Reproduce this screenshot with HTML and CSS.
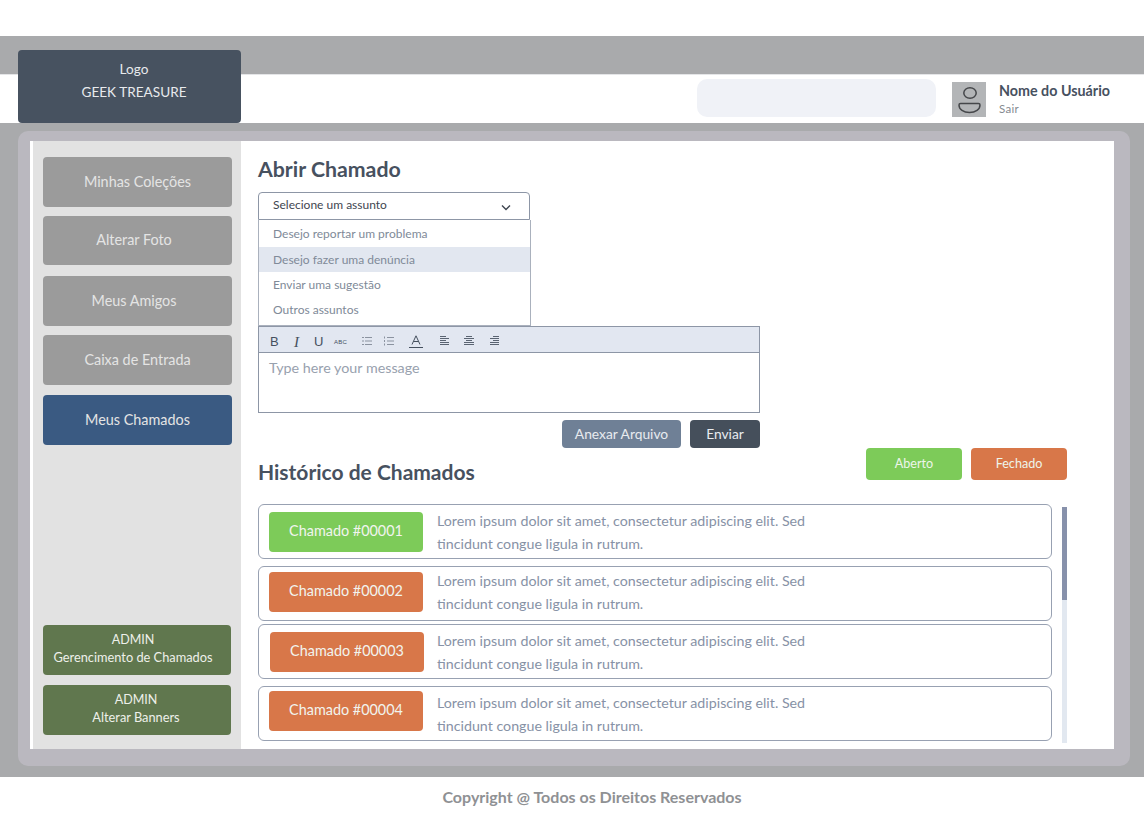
FILE: index.html
```html
<!DOCTYPE html>
<html lang="pt">
<head>
<meta charset="utf-8">
<title>Geek Treasure</title>
<link rel="stylesheet" href="styles.css">
</head>
<body>
<div class="page">
  <div class="banner"></div>
  <header class="header">
    <div class="logo"><span>Logo</span><span>GEEK TREASURE</span></div>
    <div class="search"></div>
    <div class="avatar">
      <svg width="34" height="35" viewBox="0 0 34 35" fill="none" stroke="#45474a" stroke-width="1.500"><ellipse cx="18" cy="11" rx="6.200" ry="5.300"/><path d="M8.500 21.500h18c1 0 1.500.5 1.500 1.500 0 4.500-4.500 7.500-10.500 7.500S7 27.500 7 23c0-1 .5-1.500 1.500-1.500z"/></svg>
    </div>
    <div class="user"><strong>Nome do Usuário</strong><span>Sair</span></div>
  </header>
  <div class="frame">
    <div class="panel">
      <div class="card">
        <nav class="sidebar">
          <a class="nav nav-gray">Minhas Coleções</a>
          <a class="nav nav-gray nav-b nav-shift">Alterar Foto</a>
          <a class="nav nav-gray nav-c nav-shift">Meus Amigos</a>
          <a class="nav nav-gray nav-b">Caixa de Entrada</a>
          <a class="nav nav-blue nav-d">Meus Chamados</a>
          <a class="nav nav-green nav-admin"><span>ADMIN</span><span>Gerencimento de Chamados</span></a>
          <a class="nav nav-green nav-admin2"><span>ADMIN</span><span>Alterar Banners</span></a>
        </nav>
        <main class="main">
          <h1 class="title">Abrir Chamado</h1>
          <div class="select">
            <div class="select-head">
              <span>Selecione um assunto</span>
              <svg width="10" height="8" viewBox="0 0 10 8" fill="none" stroke="#3f4650" stroke-width="1.400"><path d="M1 1.500l4 4 4-4"/></svg>
            </div>
            <ul class="options">
              <li>Desejo reportar um problema</li>
              <li class="active">Desejo fazer uma denúncia</li>
              <li>Enviar uma sugestão</li>
              <li>Outros assuntos</li>
            </ul>
          </div>
          <div class="editor">
            <div class="toolbar">
              <span class="tool tool-b">B</span>
              <span class="tool tool-i">I</span>
              <span class="tool tool-u">U</span>
              <span class="tool tool-abc">ABC</span>
              <svg class="ic ic-l1" width="10" height="10" viewBox="0 0 10 10" stroke="#8b93a0" stroke-width="1"><path d="M3 1.500h7M3 5h7M3 8.500h7M0 1.500h2M0 5h2M0 8.500h2"/></svg>
              <svg class="ic ic-l2" width="10" height="10" viewBox="0 0 10 10" stroke="#8b93a0" stroke-width="1"><path d="M3 1.500h7M3 5h7M3 8.500h7M.5 .5v2M.5 4v2M.5 7.500v2"/></svg>
              <svg class="ic ic-a" width="14" height="13" viewBox="0 0 14 13" fill="none" stroke="#45505e" stroke-width="1"><path d="M3 9.500 7 .8l4 8.700M4.500 6.500h5M0 12.500h14"/></svg>
              <svg class="ic ic-al1" width="10" height="9" viewBox="0 0 10 9" stroke="#5a6472" stroke-width="1"><path d="M0 .5h6M0 2.500h9M0 4.500h6M0 6.500h9M0 8.500h9"/></svg>
              <svg class="ic ic-al2" width="10" height="9" viewBox="0 0 10 9" stroke="#5a6472" stroke-width="1"><path d="M2 .5h6M0 2.500h10M2 4.500h6M0 6.500h10M0 8.500h10"/></svg>
              <svg class="ic ic-al3" width="10" height="9" viewBox="0 0 10 9" stroke="#5a6472" stroke-width="1"><path d="M4 .5h6M1 2.500h9M4 4.500h6M1 6.500h9M1 8.500h9"/></svg>
            </div>
            <div class="editor-body">Type here your message</div>
          </div>
          <div class="actions">
            <button class="btn btn-attach">Anexar Arquivo</button>
            <button class="btn btn-send">Enviar</button>
          </div>
          <div class="history-head">
            <h2 class="title title-history">Histórico de Chamados</h2>
            <div class="legend">
              <span class="tag tag-open">Aberto</span>
              <span class="tag tag-closed">Fechado</span>
            </div>
          </div>
          <div class="history">
            <div class="rows">
              <article class="row">
                <span class="chip chip-open">Chamado #00001</span>
                <p>Lorem ipsum dolor sit amet, consectetur adipiscing elit. Sed<br>tincidunt congue ligula in rutrum.</p>
              </article>
              <article class="row row-2">
                <span class="chip chip-closed">Chamado #00002</span>
                <p>Lorem ipsum dolor sit amet, consectetur adipiscing elit. Sed<br>tincidunt congue ligula in rutrum.</p>
              </article>
              <article class="row row-3">
                <span class="chip chip-closed chip-shift">Chamado #00003</span>
                <p>Lorem ipsum dolor sit amet, consectetur adipiscing elit. Sed<br>tincidunt congue ligula in rutrum.</p>
              </article>
              <article class="row row-4">
                <span class="chip chip-closed">Chamado #00004</span>
                <p>Lorem ipsum dolor sit amet, consectetur adipiscing elit. Sed<br>tincidunt congue ligula in rutrum.</p>
              </article>
            </div>
            <div class="scrollbar"><div class="thumb"></div></div>
          </div>
        </main>
      </div>
    </div>
  </div>
  <footer class="footer">Copyright @ Todos os Direitos Reservados</footer>
</div>
</body>
</html>
```
FILE: styles.css
```css
* { box-sizing: border-box; }
html, body { margin: 0; padding: 0; }
body { font-family: Lato, "Liberation Sans", sans-serif; background: #fff; color: #47515f; }
.page { position: relative; width: 1144px; height: 814px; padding-top: 36px; overflow: hidden; }

.banner { height: 38px; background: #a9aaac; }
.header { height: 49px; padding: 5px 0 0 697px; display: flex; align-items: flex-start; background: #fff; border-top: 1px solid #e4e5e7; }
.logo { position: absolute; left: 18px; top: 50px; width: 223px; height: 73px; padding: 8px 0 0 9px; border-radius: 4px; background: #475260; color: #e8eaed; font-size: 13.6px; line-height: 23px; display: flex; flex-direction: column; align-items: center; }
.search { width: 239px; height: 38px; margin-top: -1px; border-radius: 10px; background: #f0f2f7; }
.avatar { width: 34px; height: 35px; margin: 2px 0 0 16px; background: #b3b5b7; }
.avatar svg { display: block; }
.user { margin: 0 0 0 13px; padding-top: 2px; display: flex; flex-direction: column; }
.user strong { font-size: 14.3px; line-height: 18px; font-weight: 700; color: #47515f; }
.user span { font-size: 11.500px; line-height: 18px; color: #858a90; letter-spacing: .3px; }

.frame { height: 654px; padding: 8px 14px 11px 18px; background: #a9aaac; }
.panel { height: 635px; padding: 10px 16px 17px 12px; border-radius: 10px; background: #bab8bf; }
.card { height: 608px; padding-left: 3px; display: flex; background: #fff; }

.sidebar { width: 208px; flex: none; padding: 16px 9px 0 10px; background: #e2e2e2; display: flex; flex-direction: column; }
.nav { height: 50px; padding-bottom: 2px; border-radius: 4px; display: flex; flex-direction: column; align-items: center; justify-content: center; color: #e4e4e4; font-size: 14.4px; }
.nav-shift { padding-right: 7px; }
.nav-gray { background: #9b9b9b; }
.nav-b { height: 49px; margin-top: 9px; }
.nav-c { margin-top: 11px; }
.nav-b + .nav-c + .nav-b { height: 50px; }
.nav-d { margin-top: 10px; background: #3a5a82; }
.nav-green { background: #60774e; font-size: 12.8px; line-height: 18px; color: #eef0ea; width: 188px; padding-bottom: 3px; }
.nav-green span:first-child { font-size: 12.500px; line-height: 17px; }
.nav-admin { margin-top: 180px; padding-right: 8px; }
.nav-admin2 { margin-top: 10px; padding-right: 2px; }

.main { flex: 1; min-width: 0; padding: 0 47px 0 17px; }
.title { margin: 0; padding-top: 15px; height: 51px; font-size: 21.3px; line-height: 27px; font-weight: 700; color: #47515f; }

.select { width: 272px; font-size: 12px; }
.select-head { height: 28px; padding: 0 18px 0 14px; display: flex; align-items: center; justify-content: space-between; border: 1px solid #8d96a6; border-radius: 4px 4px 0 0; color: #3f4650; }
.select-head span { margin-top: -4px; }
.select-head svg { margin-top: 3px; }
.options { margin: 0; padding: 2px 0 3px; width: 273px; list-style: none; height: 106px; border: 1px solid #aab1bd; border-top: 0; color: #808a98; }
.options li { height: 25px; padding-left: 14px; line-height: 25px; }
.options li:first-child { line-height: 24px; }
.options .active { background: #e2e7f0; }

.editor { width: 502px; border: 1px solid #8d96a6; }
.toolbar { position: relative; height: 26px; background: #e2e7f1; border-bottom: 1px solid #8d96a6; }
.tool { position: absolute; top: 8px; line-height: 14px; font-size: 13px; color: #45505e; font-family: "Liberation Sans", sans-serif; }
.tool-b { left: 11px; }
.tool-i { left: 35px; font-family: "Liberation Serif", serif; font-style: italic; font-size: 15px; }
.tool-u { left: 55px; }
.tool-abc { left: 75px; font-size: 6px; letter-spacing: .2px; }
.ic { position: absolute; }
.ic-l1 { left: 103px; top: 9px; }
.ic-l2 { left: 125px; top: 9px; }
.ic-a { left: 150px; top: 8px; }
.ic-al1 { left: 181px; top: 9px; }
.ic-al2 { left: 205px; top: 9px; }
.ic-al3 { left: 230px; top: 9px; }
.editor-body { height: 59px; padding: 5px 10px; font-size: 14.3px; line-height: 20px; color: #98a1ae; }

.actions { width: 502px; margin-top: 7px; display: flex; justify-content: flex-end; gap: 9px; }
.btn { height: 28px; padding: 0 0 1px; border: 0; border-radius: 4px; color: #e8ebef; font: 13.8px Lato, "Liberation Sans", sans-serif; }
.btn-attach { width: 119px; background: #6f8096; }
.btn-send { width: 70px; background: #454f5b; }

.history-head { height: 56px; display: flex; justify-content: space-between; align-items: flex-start; }
.title-history { padding-top: 10px; height: 56px; font-size: 21px; }
.legend { display: flex; gap: 9px; }
.tag { width: 96px; height: 32px; padding-bottom: 2px; border-radius: 4px; display: flex; align-items: center; justify-content: center; color: #eef5ea; font-size: 12.6px; }
.tag-open { background: #7dcb59; }
.tag-closed { background: #d87749; }

.history { display: flex; gap: 10px; }
.rows { width: 794px; }
.row { height: 55px; padding: 7px 10px; display: flex; align-items: flex-start; gap: 14px; border: 1px solid #98a1b2; border-radius: 6px; }
.row-2 { margin-top: 7px; padding-top: 5px; }
.row-3 { margin-top: 3px; padding-top: 7px; }
.row-4 { margin-top: 7px; padding-top: 4px; }
.chip { flex: none; width: 154px; height: 40px; padding-bottom: 4px; border-radius: 4px; display: flex; align-items: center; justify-content: center; color: #f1f4ee; font-size: 14.4px; }
.chip-open { background: #7dcb59; }
.chip-closed { background: #d87749; }
.chip-shift { margin-left: 1px; margin-right: -1px; }
.row p { margin: -3px 0 0; font-size: 14.24px; line-height: 23px; color: #8792a6; white-space: nowrap; }
.row-2 p { margin-top: -3px; }
.row-3 p { margin-top: -3px; }
.row-4 p { margin-top: 0; }
.scrollbar { width: 5px; height: 236px; margin-top: 3px; background: #e2e8f0; }
.thumb { height: 93px; background: #8791ab; }

.footer { height: 37px; padding-left: 40px; text-align: center; line-height: 40px; font-size: 16px; font-weight: 700; color: #8f9194; }
```
